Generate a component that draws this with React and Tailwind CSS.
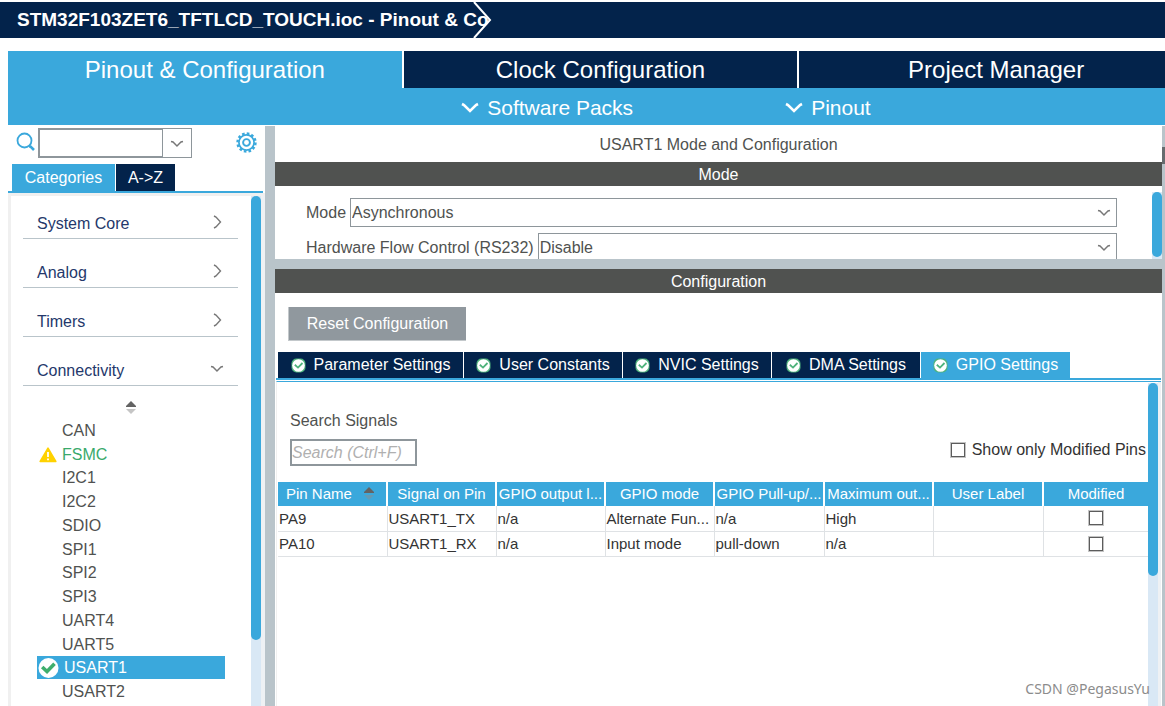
import React, { useState } from 'react';

const MAIN_TABS = ['Pinout & Configuration', 'Clock Configuration', 'Project Manager'];

const CATEGORIES = [
  { label: 'System Core', open: false },
  { label: 'Analog', open: false },
  { label: 'Timers', open: false },
  { label: 'Connectivity', open: true },
];

const PERIPHERALS = [
  { name: 'CAN' },
  { name: 'FSMC', status: 'warning' },
  { name: 'I2C1' },
  { name: 'I2C2' },
  { name: 'SDIO' },
  { name: 'SPI1' },
  { name: 'SPI2' },
  { name: 'SPI3' },
  { name: 'UART4' },
  { name: 'UART5' },
  { name: 'USART1', status: 'ok' },
  { name: 'USART2' },
];

const CONFIG_TABS = [
  { label: 'Parameter Settings', width: 'w-[186px]' },
  { label: 'User Constants', width: 'w-[159px]' },
  { label: 'NVIC Settings', width: 'w-[149px]' },
  { label: 'DMA Settings', width: 'w-[149px]' },
  { label: 'GPIO Settings', width: 'w-[149px]' },
];

const COLUMNS = [
  { label: 'Pin Name', width: 'w-[109px]' },
  { label: 'Signal on Pin', width: 'w-[109px]' },
  { label: 'GPIO output l...', width: 'w-[109px]' },
  { label: 'GPIO mode', width: 'w-[109px]' },
  { label: 'GPIO Pull-up/...', width: 'w-[110px]' },
  { label: 'Maximum out...', width: 'w-[109px]' },
  { label: 'User Label', width: 'w-[110px]' },
  { label: 'Modified', width: 'w-auto' },
];

const PINS = [
  ['PA9', 'USART1_TX', 'n/a', 'Alternate Fun...', 'n/a', 'High', ''],
  ['PA10', 'USART1_RX', 'n/a', 'Input mode', 'pull-down', 'n/a', ''],
];

function Chevron({ className, path = 'M1 1.5L3 2L7 6L11 2L13 1.5', width = 14, height = 8, stroke = 1.4 }) {
  return (
    <svg className={className} width={width} height={height} viewBox={`0 0 ${width} ${height}`} fill="none" stroke="currentColor" strokeWidth={stroke} aria-hidden="true">
      <path d={path} />
    </svg>
  );
}

function SortIcon() {
  return (
    <svg width="10" height="14" viewBox="0 0 10 14" aria-hidden="true">
      <path d="M0 6V5L3 2L5 0L7 2L10 5V6Z" fill="#636363" />
      <path d="M0 8H10L7 11L5 13L3 11Z" fill="#8c8c8c" opacity=".5" />
    </svg>
  );
}

function CheckBadge() {
  return (
    <svg className="shrink-0" width="15" height="15" viewBox="0 0 15 15" fill="none" aria-hidden="true">
      <rect x="0.5" y="0.5" width="14" height="14" rx="5" fill="#4fb37c" />
      <circle cx="7.5" cy="7.5" r="6.3" fill="#fff" />
      <path d="M3.8 6.8L7 9.6L11.5 5" stroke="#4fb37c" strokeWidth="1.8" />
    </svg>
  );
}

function CheckBox({ className = '', ...props }) {
  return (
    <input
      type="checkbox"
      className={`size-[14px] appearance-none border border-[#5c5c5c] bg-white outline-1 outline-[#c4c4c4] checked:bg-[#3aa8dc] ${className}`}
      {...props}
    />
  );
}

function ScrollBar({ thumb }) {
  return (
    <div className="w-[10px] shrink-0 bg-[#d9e8f5]">
      <div className={`w-full rounded-full bg-[#3aa8dc] ${thumb}`} />
    </div>
  );
}

function ModeSelect({ id, label, value, options, onChange }) {
  return (
    <div className="flex h-[29px] shrink-0 items-center gap-1 text-[#505250]">
      <label htmlFor={id} className="whitespace-nowrap">{label}</label>
      <div className="relative h-full min-w-0 flex-1">
        <select
          id={id}
          value={value}
          onChange={e => onChange(e.target.value)}
          className="h-full w-full appearance-none border border-[#8e969b] bg-white pl-px outline-none"
        >
          {options.map(o => <option key={o}>{o}</option>)}
        </select>
        <Chevron className="pointer-events-none absolute right-1.5 top-[11px] text-[#777]" />
      </div>
    </div>
  );
}

function Sidebar({ selected, onSelect }) {
  return (
    <aside className="flex w-[257px] shrink-0 flex-col">
      <div className="flex h-[38px] shrink-0 items-start justify-between pl-2 pr-2">
        <div className="flex pt-0.5">
          <svg className="mr-[3px] mt-1" width="19" height="20" viewBox="0 0 19 20" fill="none" stroke="#3aa8dc" strokeWidth="1.8" aria-hidden="true">
            <circle cx="8.5" cy="8.5" r="7" />
            <path d="M13 14.5H14.5L18 18" strokeWidth="2.6" />
          </svg>
          <input aria-label="Search peripherals" className="h-[30px] w-[125px] border-2 border-r border-[#8e969b] outline-none" />
          <button aria-label="Search history" className="flex h-[30px] w-[29px] items-center justify-center border border-l-0 border-[#8e969b] pt-0.5 text-[#777]">
            <Chevron />
          </button>
        </div>
        <button aria-label="Settings" className="mt-1.5">
          <svg width="21" height="21" viewBox="0 0 21 21" fill="none" stroke="#3aa8dc" aria-hidden="true">
            <circle cx="10.5" cy="10.5" r="9" strokeWidth="2.4" strokeDasharray="2.6 2.11" />
            <circle cx="10.5" cy="10.5" r="7.6" strokeWidth="1.7" />
            <circle cx="10.5" cy="10.5" r="3.4" strokeWidth="1.9" />
          </svg>
        </button>
      </div>

      <div className="mr-0.5 flex h-[29px] shrink-0 gap-px border-b-2 border-[#3aa8dc] pl-1 text-white">
        <button className="w-[103px] bg-[#3aa8dc]">Categories</button>
        <button className="w-[59px] bg-[#03234b]">A-&gt;Z</button>
      </div>

      <div className="flex min-h-0 flex-1 border-l-[3px] border-t-[3px] border-[#f0f0f0]">
        <div className="min-w-0 flex-1 overflow-hidden pl-3 pr-[13px] pt-[10px]">
          <div className="space-y-4">
            {CATEGORIES.map(c => (
              <button key={c.label} className="flex h-[33px] w-full items-center justify-between border-b border-[#b9c4ca] pl-[14px] pr-[14px] pt-1 text-[#24386b]">
                {c.label}
                {c.open
                  ? <Chevron className="mb-1 text-[#777]" />
                  : <Chevron className="mb-1 mr-0.5 text-[#777]" path="M1 1L3 2L7.5 7L3 12L1 13" width={9} height={14} />}
              </button>
            ))}
          </div>

          <div className="flex justify-center pt-[15px]">
            <SortIcon />
          </div>

          <ul className="ml-[14px] mr-[13px] mt-[3px] grid h-[285px] auto-rows-fr">
            {PERIPHERALS.map(p => {
              const active = p.name === selected;
              return (
                <li key={p.name}>
                  <button
                    onClick={() => onSelect(p.name)}
                    className={`flex h-full w-full items-center pt-0.5 text-left ${active ? 'bg-[#3aa8dc] text-white' : p.status === 'warning' ? 'text-[#39a96b]' : 'text-[#505250]'}`}
                  >
                    <span className={`flex shrink-0 justify-center ${active ? 'w-[27px] pr-1' : 'w-[25px] pr-[3px]'}`}>
                      {p.status === 'warning' && (
                        <svg width="18" height="16" viewBox="0 0 18 16" aria-hidden="true">
                          <path d="M9 1.2L16.8 14.5H1.2Z" fill="#ffd200" stroke="#ffd200" strokeWidth="1.6" strokeLinejoin="round" />
                          <path d="M9 5V10M9 11.5V13.3" stroke="#fff" strokeWidth="1.8" />
                        </svg>
                      )}
                      {p.status === 'ok' && (
                        <svg width="21" height="20" viewBox="0 0 21 20" aria-hidden="true">
                          <circle cx="10.5" cy="10" r="10" fill="#fff" />
                          <path d="M4.2 9L9 13.5L16.5 5.8" fill="none" stroke="#3fae6d" strokeWidth="3.6" />
                        </svg>
                      )}
                    </span>
                    {p.name}
                  </button>
                </li>
              );
            })}
          </ul>
        </div>
        <ScrollBar thumb="h-[444px]" />
        <div className="w-1 shrink-0 bg-[#eef1f4]" />
      </div>
    </aside>
  );
}

function PinTable() {
  return (
    <table className="w-full table-fixed border-collapse text-[15px]">
      <thead>
        <tr className="h-6 text-white">
          {COLUMNS.map((c, i) => (
            <th key={c.label} className={`overflow-hidden whitespace-nowrap border-r-2 border-white bg-[#3aa8dc] p-0 font-normal last:border-r-0 ${c.width}`}>
              {i === 0 ? (
                <span className="flex items-center gap-3 pl-2">{c.label}<SortIcon /></span>
              ) : c.label}
            </th>
          ))}
        </tr>
      </thead>
      <tbody>
        {PINS.map(row => (
          <tr key={row[0]} className="h-[25px] border-b border-[#dfe2e5] text-[#333]">
            {row.map((cell, i) => (
              <td key={i} className="overflow-hidden whitespace-nowrap border-r border-[#dfe2e5] p-0 pl-px pt-px">{cell}</td>
            ))}
            <td className="p-0">
              <CheckBox aria-label={`${row[0]} modified`} className="mx-auto block" />
            </td>
          </tr>
        ))}
      </tbody>
    </table>
  );
}

export default function App() {
  const [mode, setMode] = useState('Asynchronous');
  const [flow, setFlow] = useState('Disable');
  const [peripheral, setPeripheral] = useState('USART1');
  const [tab, setTab] = useState('GPIO Settings');

  return (
    <div className="relative flex h-screen flex-col overflow-hidden bg-white font-['Liberation_Sans',Arial,sans-serif] text-base leading-5">
      {/* Breadcrumb */}
      <header className="mt-0.5 flex h-9 shrink-0 items-center bg-[#03234b] pl-[17px] text-white">
        <h1 className="relative whitespace-nowrap text-[19px] font-bold">
          STM32F103ZET6_TFTLCD_TOUCH.ioc - Pinout &amp; Co
          <svg className="absolute -right-1 -top-2" width="20" height="36" viewBox="0 0 20 36" fill="none" stroke="#fff" strokeWidth="2" aria-hidden="true">
            <path d="M1 0L17 18L1 36" />
          </svg>
        </h1>
      </header>

      {/* Main tabs */}
      <nav className="ml-2 mt-[13px] shrink-0 overflow-hidden bg-[#3aa8dc] text-white">
        <div className="-mr-[30px] grid h-[37px] grid-cols-3 text-2xl">
          {MAIN_TABS.map((t, i) => (
            <button key={t} className={`border-r-2 border-white ${i === 0 ? 'bg-[#3aa8dc]' : 'bg-[#03234b]'}`}>{t}</button>
          ))}
        </div>
        <div className="ml-[39%] flex h-[37px] items-center gap-[152px] pl-0.5 pt-0.5 text-[21px]">
          {['Software Packs', 'Pinout'].map(m => (
            <button key={m} className="flex items-center gap-2">
              <Chevron width={18} height={12} stroke={2.6} path="M1 2L3 3L9 9L15 3L17 2" />
              {m}
            </button>
          ))}
        </div>
      </nav>

      <div className="ml-2 mt-px flex min-h-0 flex-1">
        <Sidebar selected={peripheral} onSelect={setPeripheral} />
        <div className="w-[10px] shrink-0 bg-[#b9c4ca]" />

        <main className="flex min-w-0 flex-1 flex-col">
          <h2 className="flex h-9 shrink-0 items-center justify-center pt-0.5 text-[#505250]">USART1 Mode and Configuration</h2>
          <h3 className="flex h-6 shrink-0 items-center justify-center bg-[#505250] pt-0.5 text-white">Mode</h3>
          <section className="flex h-[73px] shrink-0 overflow-hidden">
            <div className="flex min-w-0 flex-1 flex-col gap-1.5 pl-[31px] pr-[35px] pt-3">
              <ModeSelect id="mode" label="Mode" value={mode} onChange={setMode} options={['Asynchronous', 'Synchronous', 'Disable']} />
              <ModeSelect id="flow" label="Hardware Flow Control (RS232)" value={flow} onChange={setFlow} options={['Disable', 'CTS Only', 'RTS Only', 'CTS/RTS']} />
            </div>
            <div className="flex pt-1.5">
              <ScrollBar thumb="h-[65px]" />
            </div>
          </section>

          <div className="h-[10px] shrink-0 bg-[#b9c4ca]" />
          <h3 className="flex h-6 shrink-0 items-center justify-center bg-[#505250] pt-0.5 text-white">Configuration</h3>

          <div className="shrink-0 pl-[13px] pt-[14px]">
            <button className="h-[34px] w-[178px] border-b border-l border-[#c3c8cb] bg-[#90989e] text-white">Reset Configuration</button>
          </div>

          {/* Settings tabs */}
          <div className="ml-px mr-px mt-[11px] flex h-[28px] shrink-0 border-b-2 border-[#3aa8dc] pl-0.5 text-white">
            {CONFIG_TABS.map(t => (
              <button
                key={t.label}
                onClick={() => setTab(t.label)}
                className={`flex items-center justify-center gap-2 border-r border-white last:border-r-0 ${t.width} ${t.label === tab ? 'bg-[#3aa8dc]' : 'bg-[#03234b]'}`}
              >
                <CheckBadge />
                {t.label}
              </button>
            ))}
          </div>

          <section className="mx-px mt-px flex min-h-0 flex-1 border-l border-t border-l-[#f0f0f0] border-t-[#3aa8dc]">
            <div className="min-w-0 flex-1 overflow-hidden pl-px">
              <div className="flex items-end justify-between pl-3 pr-0.5 pt-[29px]">
                <div className="flex flex-col gap-2 text-[#505250]">
                  <label htmlFor="signals">Search Signals</label>
                  <input id="signals" placeholder="Search (Ctrl+F)" className="h-[27px] w-[127px] border-2 border-[#8e969b] outline-none placeholder:italic placeholder:text-[#b0b0b0]" />
                </div>
                <label className="mb-1.5 flex items-center gap-[7px] text-[#333]">
                  <CheckBox />
                  Show only Modified Pins
                </label>
              </div>
              <div className="mt-4">
                <PinTable />
              </div>
            </div>
            <div className="flex pt-px">
              <ScrollBar thumb="h-[193px]" />
            </div>
            <div className="w-[3px] shrink-0 bg-[#eef1f4]" />
          </section>
        </main>
        <div className="w-[3px] shrink-0 bg-[#b9c4ca] pt-[21px]">
          <div className="h-[17px] bg-[#666b6e]" />
        </div>
      </div>

      {/* Watermark */}
      <p className="pointer-events-none absolute bottom-[7px] right-[15px] font-['Noto_Sans',sans-serif] text-sm text-[#8c8c8c]">CSDN @PegasusYu</p>
    </div>
  );
}
